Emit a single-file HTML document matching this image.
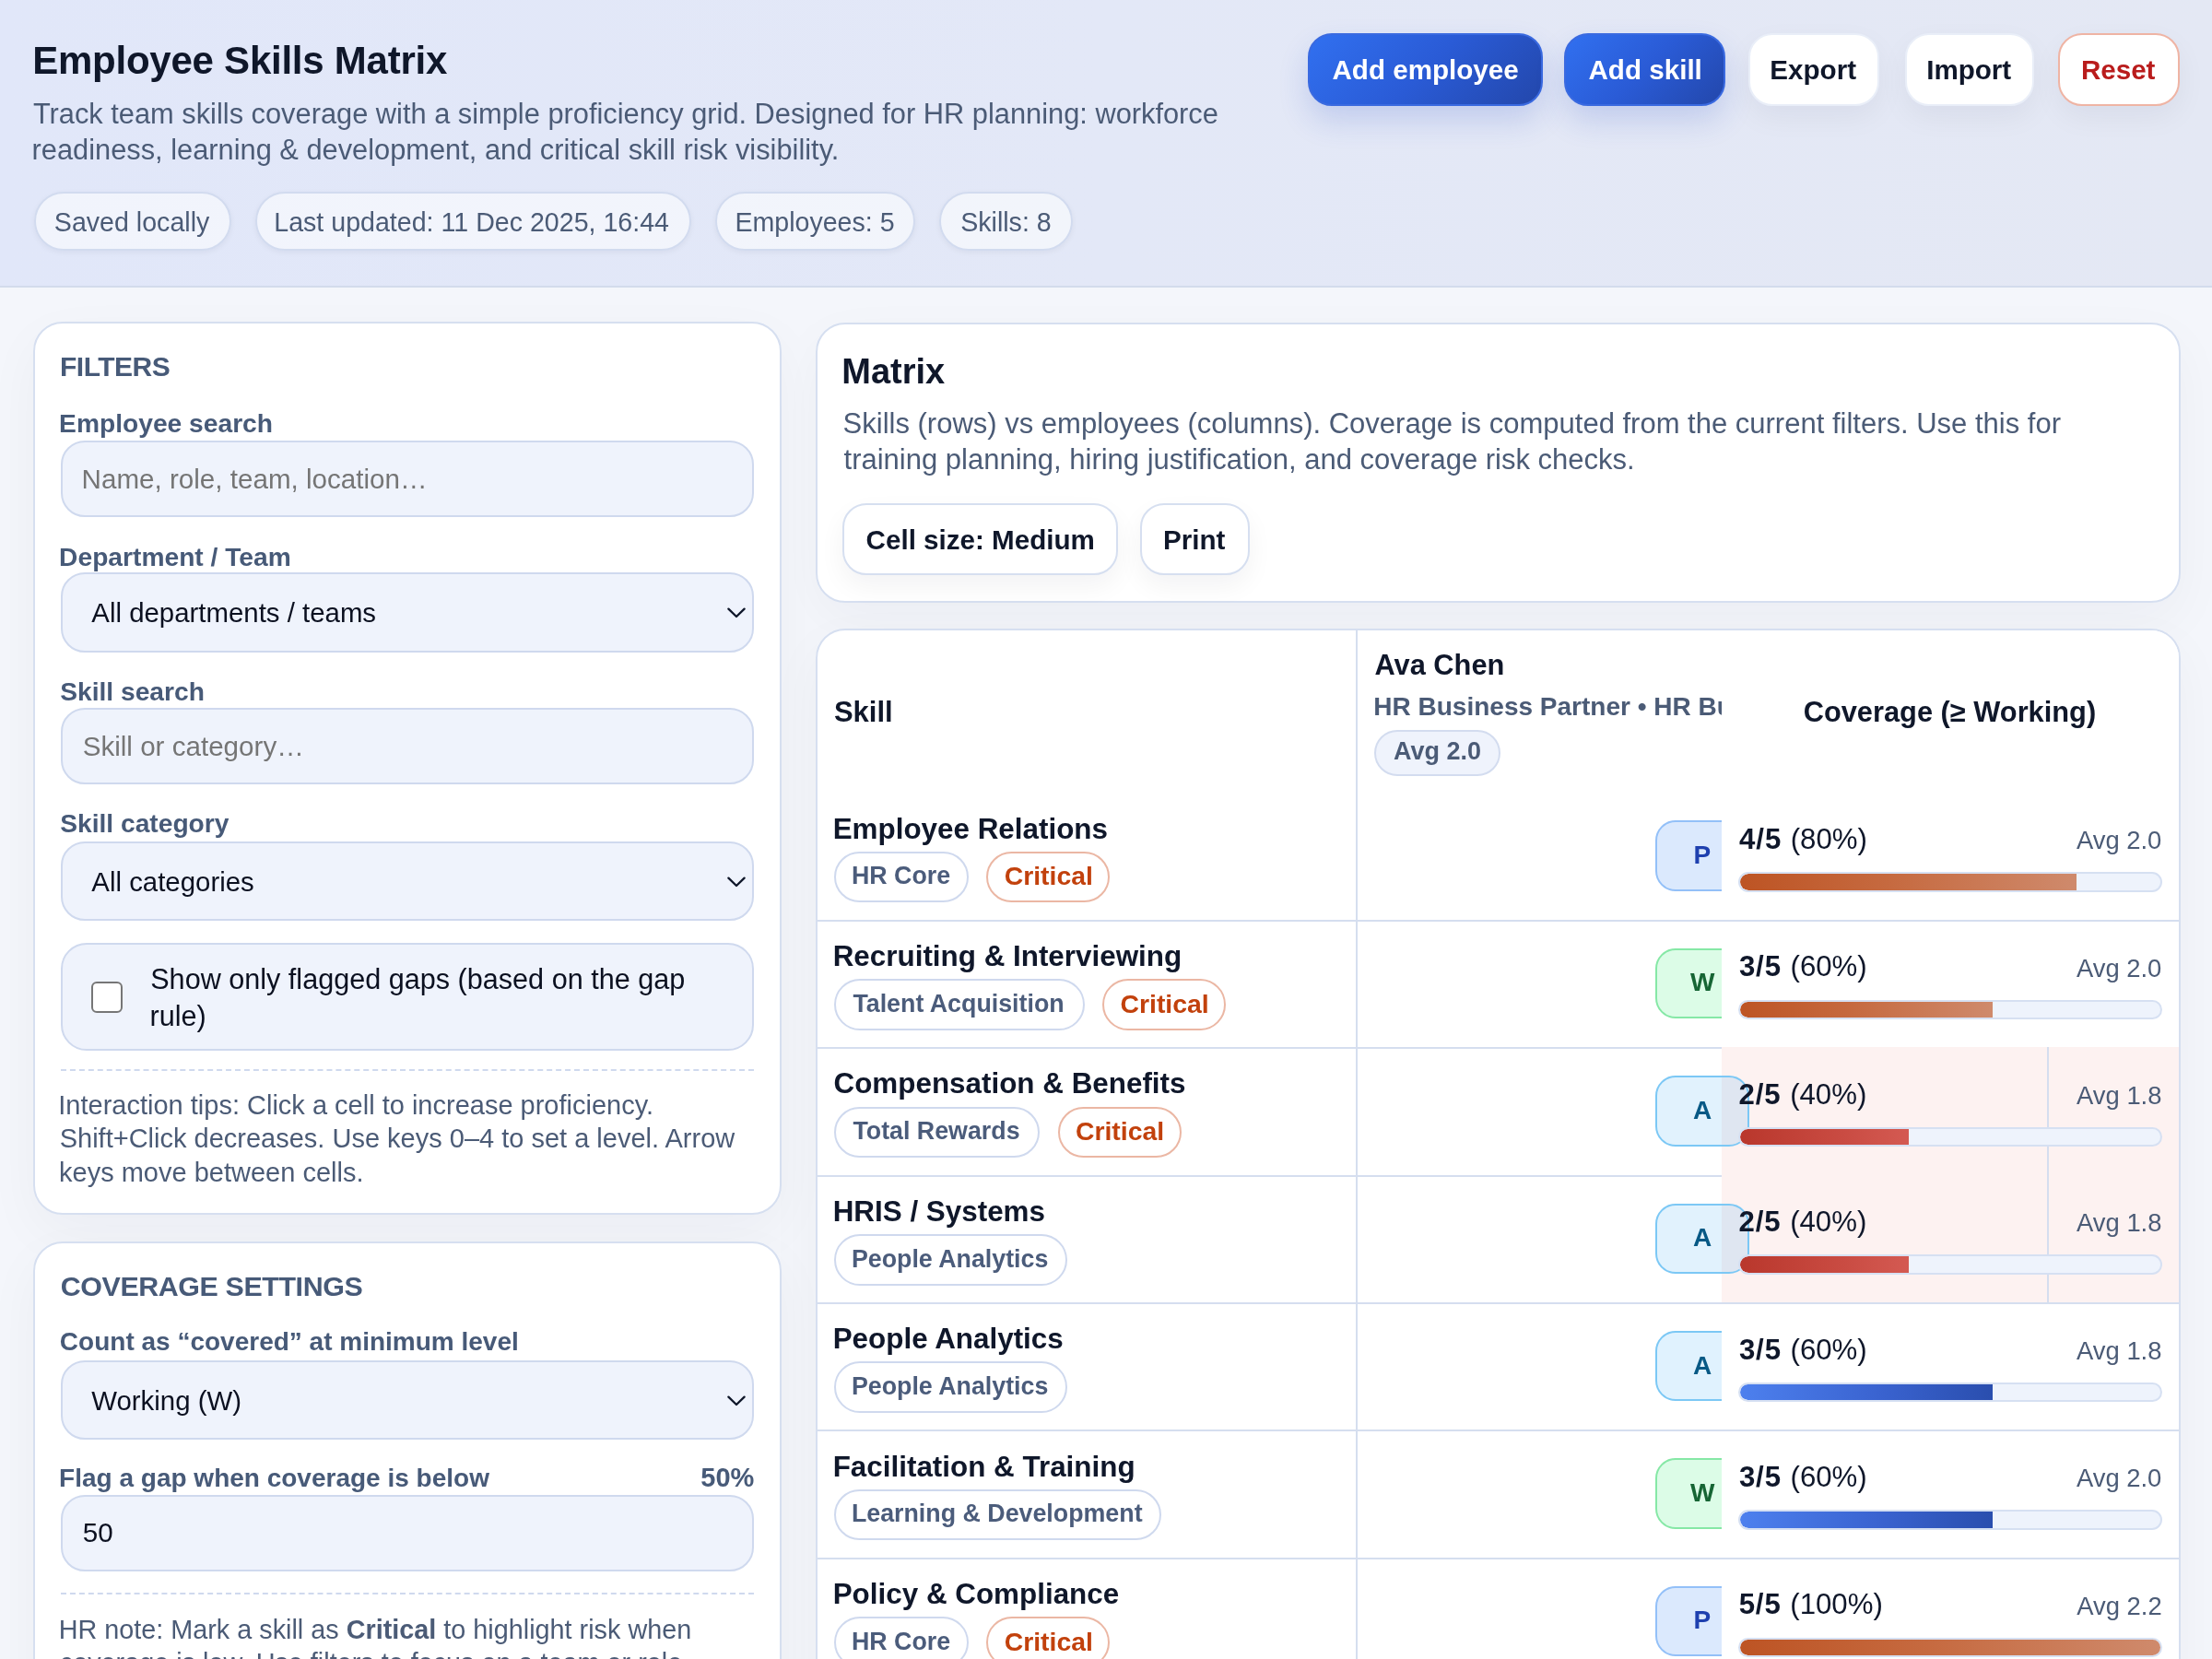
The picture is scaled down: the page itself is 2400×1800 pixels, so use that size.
<!DOCTYPE html>
<html><head><meta charset="utf-8"><title>Employee Skills Matrix</title><style>
html,body{margin:0;padding:0}
html{zoom:2}
@media (max-width:1600px){html{zoom:1}}
body{will-change:transform;width:1200px;height:900px;overflow:hidden;position:relative;background:#f4f6fb;font-family:"Liberation Sans",sans-serif}
.t{position:absolute;white-space:nowrap;line-height:1}
.b{position:absolute}
b{font-weight:700}
</style></head><body>
<div class="b" style="left:0.00px;top:0.00px;width:1200.00px;height:155.50px;background:linear-gradient(90deg,#e1e7f9 0%,#e3e8f7 50%,#e4e8f4 100%);border-bottom:1px solid #d3dbec;box-sizing:border-box;height:156px"></div>
<div class="t" style="left:17.60px;top:22.37px;font-size:21px;font-weight:700;color:#0f172a;letter-spacing:-0.12px;">Employee Skills Matrix</div>
<div class="t" style="left:17.95px;top:54.66px;font-size:15.4px;font-weight:400;color:#4b5b76;letter-spacing:0px;">Track team skills coverage with a simple proficiency grid. Designed for HR planning: workforce</div>
<div class="t" style="left:17.28px;top:74.06px;font-size:15.4px;font-weight:400;color:#4b5b76;letter-spacing:0px;">readiness, learning &amp; development, and critical skill risk visibility.</div>
<div class="b" style="left:18.40px;top:104.00px;width:106.90px;height:32.00px;border:1px solid #d2dbef;background:rgba(255,255,255,.55);border-radius:16px;box-sizing:border-box;box-shadow:0 1px 3px rgba(15,23,42,.05)"></div>
<div class="t" style="left:29.41px;top:113.59px;font-size:14.3px;font-weight:400;color:#4b5b76;letter-spacing:0px;">Saved locally</div>
<div class="b" style="left:138.30px;top:104.00px;width:236.90px;height:32.00px;border:1px solid #d2dbef;background:rgba(255,255,255,.55);border-radius:16px;box-sizing:border-box;box-shadow:0 1px 3px rgba(15,23,42,.05)"></div>
<div class="t" style="left:148.64px;top:113.59px;font-size:14.3px;font-weight:400;color:#4b5b76;letter-spacing:0px;">Last updated: 11 Dec 2025, 16:44</div>
<div class="b" style="left:388.20px;top:104.00px;width:108.20px;height:32.00px;border:1px solid #d2dbef;background:rgba(255,255,255,.55);border-radius:16px;box-sizing:border-box;box-shadow:0 1px 3px rgba(15,23,42,.05)"></div>
<div class="t" style="left:398.69px;top:113.59px;font-size:14.3px;font-weight:400;color:#4b5b76;letter-spacing:0px;">Employees: 5</div>
<div class="b" style="left:509.40px;top:104.00px;width:72.70px;height:32.00px;border:1px solid #d2dbef;background:rgba(255,255,255,.55);border-radius:16px;box-sizing:border-box;box-shadow:0 1px 3px rgba(15,23,42,.05)"></div>
<div class="t" style="left:521.10px;top:113.59px;font-size:14.3px;font-weight:400;color:#4b5b76;letter-spacing:0px;">Skills: 8</div>
<div class="b" style="left:709.50px;top:18.00px;width:127.50px;height:39.50px;background:linear-gradient(135deg,#3170f0 0%,#2a5bd6 50%,#2347ab 100%);border:1px solid #3a6ae0;box-shadow:0 8px 16px rgba(37,80,200,.18);border-radius:13px;box-sizing:border-box"></div>
<div class="t" style="left:722.74px;top:30.47px;font-size:14.8px;font-weight:700;color:#ffffff;letter-spacing:0px;">Add employee</div>
<div class="b" style="left:848.30px;top:18.00px;width:87.90px;height:39.50px;background:linear-gradient(135deg,#3170f0 0%,#2a5bd6 50%,#2347ab 100%);border:1px solid #3a6ae0;box-shadow:0 8px 16px rgba(37,80,200,.18);border-radius:13px;box-sizing:border-box"></div>
<div class="t" style="left:861.75px;top:30.47px;font-size:14.8px;font-weight:700;color:#ffffff;letter-spacing:0px;">Add skill</div>
<div class="b" style="left:948.50px;top:18.00px;width:71.00px;height:39.50px;background:#fff;border:1px solid #e9eef8;box-shadow:0 6px 16px rgba(15,23,42,.05);border-radius:13px;box-sizing:border-box"></div>
<div class="t" style="left:960.16px;top:30.47px;font-size:14.8px;font-weight:700;color:#0f172a;letter-spacing:0px;">Export</div>
<div class="b" style="left:1033.50px;top:18.00px;width:70.00px;height:39.50px;background:#fff;border:1px solid #e9eef8;box-shadow:0 6px 16px rgba(15,23,42,.05);border-radius:13px;box-sizing:border-box"></div>
<div class="t" style="left:1045.08px;top:30.47px;font-size:14.8px;font-weight:700;color:#0f172a;letter-spacing:0px;">Import</div>
<div class="b" style="left:1116.30px;top:18.00px;width:66.40px;height:39.50px;background:#fff;border:1px solid #efb4a4;box-shadow:0 6px 16px rgba(15,23,42,.05);border-radius:13px;box-sizing:border-box"></div>
<div class="t" style="left:1128.94px;top:30.47px;font-size:14.8px;font-weight:700;color:#b91c1c;letter-spacing:0px;">Reset</div>
<div class="b" style="left:18.00px;top:174.50px;width:406.00px;height:484.50px;background:#fff;border:1px solid #d6dff0;border-radius:16px;box-sizing:border-box;box-shadow:0 10px 30px rgba(15,23,42,.04)"></div>
<div class="t" style="left:32.50px;top:191.60px;font-size:15.0px;font-weight:700;color:#475a78;letter-spacing:-0.25px;">FILTERS</div>
<div class="t" style="left:32.06px;top:222.56px;font-size:14.1px;font-weight:700;color:#475a78;letter-spacing:0px;">Employee search</div>
<div class="b" style="left:32.80px;top:239.00px;width:376.00px;height:41.50px;background:#eff3fc;border:1px solid #cfd9ee;border-radius:13px;box-sizing:border-box"></div>
<div class="t" style="left:44.29px;top:252.27px;font-size:14.8px;font-weight:400;color:#757575;letter-spacing:0px;">Name, role, team, location…</div>
<div class="t" style="left:32.06px;top:294.96px;font-size:14.1px;font-weight:700;color:#475a78;letter-spacing:0px;">Department / Team</div>
<div class="b" style="left:32.80px;top:310.70px;width:376.00px;height:43.10px;background:#eff3fc;border:1px solid #cfd9ee;border-radius:13px;box-sizing:border-box"></div>
<div class="t" style="left:49.67px;top:324.95px;font-size:14.7px;font-weight:400;color:#0b1020;letter-spacing:0px;">All departments / teams</div>
<div class="b" style="left:394.50px;top:329.50px;width:10px;height:6px;line-height:0"><svg width="10" height="6" viewBox="0 0 10 6"><path d="M0.7 0.8 L5 5 L9.3 0.8" fill="none" stroke="#0f172a" stroke-width="1.15" stroke-linecap="round" stroke-linejoin="round"/></svg></div>
<div class="t" style="left:32.59px;top:368.21px;font-size:14.1px;font-weight:700;color:#475a78;letter-spacing:0px;">Skill search</div>
<div class="b" style="left:32.80px;top:384.00px;width:376.00px;height:41.40px;background:#eff3fc;border:1px solid #cfd9ee;border-radius:13px;box-sizing:border-box"></div>
<div class="t" style="left:44.83px;top:397.67px;font-size:14.8px;font-weight:400;color:#757575;letter-spacing:0px;">Skill or category…</div>
<div class="t" style="left:32.59px;top:439.56px;font-size:14.1px;font-weight:700;color:#475a78;letter-spacing:0px;">Skill category</div>
<div class="b" style="left:32.80px;top:456.40px;width:376.00px;height:43.00px;background:#eff3fc;border:1px solid #cfd9ee;border-radius:13px;box-sizing:border-box"></div>
<div class="t" style="left:49.67px;top:470.85px;font-size:14.7px;font-weight:400;color:#0b1020;letter-spacing:0px;">All categories</div>
<div class="b" style="left:394.50px;top:475.50px;width:10px;height:6px;line-height:0"><svg width="10" height="6" viewBox="0 0 10 6"><path d="M0.7 0.8 L5 5 L9.3 0.8" fill="none" stroke="#0f172a" stroke-width="1.15" stroke-linecap="round" stroke-linejoin="round"/></svg></div>
<div class="b" style="left:32.80px;top:511.70px;width:376.00px;height:58.50px;background:#eff3fc;border:1px solid #cfd9ee;border-radius:13px;box-sizing:border-box;border-radius:14px"></div>
<div class="b" style="left:49.60px;top:532.50px;width:16.70px;height:16.80px;background:#fff;border:1px solid #767676;border-radius:3px;box-sizing:border-box"></div>
<div class="t" style="left:81.61px;top:523.55px;font-size:15.3px;font-weight:400;color:#0b1020;letter-spacing:0px;">Show only flagged gaps (based on the gap</div>
<div class="t" style="left:81.28px;top:543.35px;font-size:15.3px;font-weight:400;color:#0b1020;letter-spacing:0px;">rule)</div>
<div class="b" style="left:32.80px;top:580.00px;width:376.00px;height:1.00px;border-top:1px dashed #cfd9ee;box-sizing:border-box"></div>
<div class="t" style="left:31.66px;top:592.32px;font-size:14.5px;font-weight:400;color:#4b5b76;letter-spacing:0px;">Interaction tips: Click a cell to increase proficiency.</div>
<div class="t" style="left:32.34px;top:610.42px;font-size:14.5px;font-weight:400;color:#4b5b76;letter-spacing:0px;">Shift+Click decreases. Use keys 0–4 to set a level. Arrow</div>
<div class="t" style="left:32.02px;top:628.82px;font-size:14.5px;font-weight:400;color:#4b5b76;letter-spacing:0px;">keys move between cells.</div>
<div class="b" style="left:18.00px;top:673.50px;width:406.00px;height:326.50px;background:#fff;border:1px solid #d6dff0;border-radius:16px;box-sizing:border-box;box-shadow:0 10px 30px rgba(15,23,42,.04)"></div>
<div class="t" style="left:32.88px;top:690.03px;font-size:15.2px;font-weight:700;color:#475a78;letter-spacing:-0.2px;">COVERAGE SETTINGS</div>
<div class="t" style="left:32.43px;top:721.15px;font-size:14.0px;font-weight:700;color:#475a78;letter-spacing:0px;">Count as “covered” at minimum level</div>
<div class="b" style="left:32.80px;top:738.00px;width:376.00px;height:42.80px;background:#eff3fc;border:1px solid #cfd9ee;border-radius:13px;box-sizing:border-box"></div>
<div class="t" style="left:49.64px;top:752.35px;font-size:14.7px;font-weight:400;color:#0b1020;letter-spacing:0px;">Working (W)</div>
<div class="b" style="left:394.50px;top:757.00px;width:10px;height:6px;line-height:0"><svg width="10" height="6" viewBox="0 0 10 6"><path d="M0.7 0.8 L5 5 L9.3 0.8" fill="none" stroke="#0f172a" stroke-width="1.15" stroke-linecap="round" stroke-linejoin="round"/></svg></div>
<div class="t" style="left:32.06px;top:795.15px;font-size:14.0px;font-weight:700;color:#475a78;letter-spacing:0px;">Flag a gap when coverage is below</div>
<div class="t" style="left:380.16px;top:794.72px;font-size:14.5px;font-weight:700;color:#475a78;letter-spacing:0px;">50%</div>
<div class="b" style="left:32.80px;top:811.20px;width:376.00px;height:41.20px;background:#eff3fc;border:1px solid #cfd9ee;border-radius:13px;box-sizing:border-box"></div>
<div class="t" style="left:44.91px;top:823.77px;font-size:14.8px;font-weight:400;color:#0b1020;letter-spacing:0px;">50</div>
<div class="b" style="left:32.80px;top:864.20px;width:376.00px;height:1.00px;border-top:1px dashed #cfd9ee;box-sizing:border-box"></div>
<div class="t" style="left:31.82px;top:876.91px;font-size:14.4px;font-weight:400;color:#4b5b76;letter-spacing:0px;">HR note: Mark a skill as <b style="font-weight:700">Critical</b> to highlight risk when</div>
<div class="t" style="left:32.39px;top:894.91px;font-size:14.4px;font-weight:400;color:#4b5b76;letter-spacing:0px;">coverage is low. Use filters to focus on a team or role.</div>
<div class="b" style="left:442.50px;top:175.00px;width:740.50px;height:151.90px;background:#fff;border:1px solid #d6dff0;border-radius:16px;box-sizing:border-box;box-shadow:0 10px 30px rgba(15,23,42,.04)"></div>
<div class="t" style="left:456.63px;top:192.01px;font-size:19px;font-weight:700;color:#0f172a;letter-spacing:0px;">Matrix</div>
<div class="t" style="left:457.30px;top:221.78px;font-size:15.5px;font-weight:400;color:#4b5b76;letter-spacing:0px;">Skills (rows) vs employees (columns). Coverage is computed from the current filters. Use this for</div>
<div class="t" style="left:457.77px;top:241.38px;font-size:15.5px;font-weight:400;color:#4b5b76;letter-spacing:0px;">training planning, hiring justification, and coverage risk checks.</div>
<div class="b" style="left:457.20px;top:273.00px;width:149.10px;height:39.00px;background:#fff;border:1px solid #d6dff0;border-radius:13px;box-sizing:border-box;box-shadow:0 6px 14px rgba(15,23,42,.05)"></div>
<div class="t" style="left:469.81px;top:285.57px;font-size:14.8px;font-weight:700;color:#0f172a;letter-spacing:0px;">Cell size: Medium</div>
<div class="b" style="left:618.70px;top:273.00px;width:59.10px;height:39.00px;background:#fff;border:1px solid #d6dff0;border-radius:13px;box-sizing:border-box;box-shadow:0 6px 14px rgba(15,23,42,.05)"></div>
<div class="t" style="left:630.99px;top:285.57px;font-size:14.8px;font-weight:700;color:#0f172a;letter-spacing:0px;">Print</div>
<div class="b" style="left:442.5px;top:340.9px;width:740.5px;height:700px;background:#fff;border:1px solid #d6dff0;border-radius:16px;box-sizing:border-box;box-shadow:0 10px 30px rgba(15,23,42,.04);overflow:hidden">
<div class="b" style="left:291.90px;top:-1.00px;width:1.00px;height:1459.10px;background:#d5deef"></div>
<div class="t" style="left:8.95px;top:36.48px;font-size:15.5px;font-weight:700;color:#0f172a;letter-spacing:0px;">Skill</div>
<div class="t" style="left:302.22px;top:11.36px;font-size:15.4px;font-weight:700;color:#0f172a;letter-spacing:0px;">Ava Chen</div>
<div class="t" style="left:301.66px;top:34.80px;font-size:14.0px;font-weight:700;color:#4b5b76;letter-spacing:0px;">HR Business Partner • HR Business Partners</div>
<div class="b" style="left:302.20px;top:54.10px;width:68.30px;height:25.00px;background:#eff3fc;border:1px solid #d3dcef;border-radius:13px;box-sizing:border-box"></div>
<div class="t" style="left:312.45px;top:59.17px;font-size:13.5px;font-weight:700;color:#4b5b76;letter-spacing:0px;">Avg 2.0</div>
<div class="b" style="left:-1.00px;top:157.00px;width:740.50px;height:1.00px;background:#d5deef"></div>
<div class="t" style="left:8.35px;top:99.91px;font-size:15.7px;font-weight:700;color:#0f172a;letter-spacing:0px;">Employee Relations</div>
<div class="b" style="left:9.10px;top:120.00px;width:72.75px;height:27.80px;border:1px solid #cfd9ee;border-radius:14px;box-sizing:border-box;background:#fff"></div>
<div class="t" style="left:18.45px;top:126.85px;font-size:13.4px;font-weight:700;color:#4b5c7b;letter-spacing:0px;">HR Core</div>
<div class="b" style="left:91.65px;top:120.00px;width:67.05px;height:27.80px;border:1px solid #ebb7a4;border-radius:14px;box-sizing:border-box;background:#fff"></div>
<div class="t" style="left:101.32px;top:126.18px;font-size:14.2px;font-weight:700;color:#c2410c;letter-spacing:0px;">Critical</div>
<div class="b" style="left:454.60px;top:103.30px;width:51.10px;height:38.20px;background:#dbe9fd;border:1px solid #93c0f8;border-radius:11px;box-sizing:border-box"></div>
<div class="t" style="left:475.20px;top:115.15px;font-size:14.0px;font-weight:700;color:#1e40af;letter-spacing:0px;">P</div>
<div class="b" style="left:490.60px;top:88.80px;width:248.90px;height:68.20px;background:#fff"></div>
<div class="t" style="left:500.06px;top:105.59px;font-size:15.6px;font-weight:700;color:#0f172a;letter-spacing:0px;"><span style="letter-spacing:.45px">4/5 </span><span style="font-weight:400">(80%)</span></div>
<div class="t" style="left:682.98px;top:107.20px;font-size:13.7px;font-weight:400;color:#4b5b76;letter-spacing:0px;">Avg 2.0</div>
<div class="b" style="left:499.60px;top:131.20px;width:230.00px;height:10.70px;background:#eef3fc;border:1px solid #d6e0f2;border-radius:6px;box-sizing:border-box;overflow:hidden"><div style="position:absolute;left:0;top:0;bottom:0;width:80.0%;background:linear-gradient(90deg,#bd5424 0%,#c66a40 45%,#cf8a6c 100%);border-radius:5px 0 0 5px"></div></div>
<div class="b" style="left:-1.00px;top:226.20px;width:740.50px;height:1.00px;background:#d5deef"></div>
<div class="t" style="left:8.35px;top:169.11px;font-size:15.7px;font-weight:700;color:#0f172a;letter-spacing:0px;">Recruiting &amp; Interviewing</div>
<div class="b" style="left:9.10px;top:189.20px;width:135.66px;height:27.80px;border:1px solid #cfd9ee;border-radius:14px;box-sizing:border-box;background:#fff"></div>
<div class="t" style="left:19.20px;top:196.05px;font-size:13.4px;font-weight:700;color:#4b5c7b;letter-spacing:0px;">Talent Acquisition</div>
<div class="b" style="left:154.56px;top:189.20px;width:67.05px;height:27.80px;border:1px solid #ebb7a4;border-radius:14px;box-sizing:border-box;background:#fff"></div>
<div class="t" style="left:164.22px;top:195.38px;font-size:14.2px;font-weight:700;color:#c2410c;letter-spacing:0px;">Critical</div>
<div class="b" style="left:454.60px;top:172.50px;width:51.10px;height:38.20px;background:#dcfce7;border:1px solid #86e8a6;border-radius:11px;box-sizing:border-box"></div>
<div class="t" style="left:473.49px;top:184.35px;font-size:14.0px;font-weight:700;color:#166534;letter-spacing:0px;">W</div>
<div class="b" style="left:490.60px;top:158.00px;width:248.90px;height:68.20px;background:#fff"></div>
<div class="t" style="left:499.94px;top:174.79px;font-size:15.6px;font-weight:700;color:#0f172a;letter-spacing:0px;"><span style="letter-spacing:.45px">3/5 </span><span style="font-weight:400">(60%)</span></div>
<div class="t" style="left:682.98px;top:176.40px;font-size:13.7px;font-weight:400;color:#4b5b76;letter-spacing:0px;">Avg 2.0</div>
<div class="b" style="left:499.60px;top:200.40px;width:230.00px;height:10.70px;background:#eef3fc;border:1px solid #d6e0f2;border-radius:6px;box-sizing:border-box;overflow:hidden"><div style="position:absolute;left:0;top:0;bottom:0;width:60.0%;background:linear-gradient(90deg,#bd5424 0%,#c66a40 45%,#cf8a6c 100%);border-radius:5px 0 0 5px"></div></div>
<div class="b" style="left:-1.00px;top:295.40px;width:740.50px;height:1.00px;background:#d5deef"></div>
<div class="t" style="left:8.76px;top:238.31px;font-size:15.7px;font-weight:700;color:#0f172a;letter-spacing:0px;">Compensation &amp; Benefits</div>
<div class="b" style="left:9.10px;top:258.40px;width:111.39px;height:27.80px;border:1px solid #cfd9ee;border-radius:14px;box-sizing:border-box;background:#fff"></div>
<div class="t" style="left:19.20px;top:265.25px;font-size:13.4px;font-weight:700;color:#4b5c7b;letter-spacing:0px;">Total Rewards</div>
<div class="b" style="left:130.29px;top:258.40px;width:67.05px;height:27.80px;border:1px solid #ebb7a4;border-radius:14px;box-sizing:border-box;background:#fff"></div>
<div class="t" style="left:139.96px;top:264.58px;font-size:14.2px;font-weight:700;color:#c2410c;letter-spacing:0px;">Critical</div>
<div class="b" style="left:490.60px;top:226.20px;width:248.90px;height:69.20px;background:#fdf2f1"></div>
<div class="b" style="left:667.10px;top:226.20px;width:1.00px;height:69.20px;background:#d5deef"></div>
<div class="b" style="left:454.60px;top:241.70px;width:51.10px;height:38.20px;background:rgba(40,160,240,.14);border:1px solid #7cc8f5;border-radius:11px;box-sizing:border-box"></div>
<div class="t" style="left:475.06px;top:253.55px;font-size:14.0px;font-weight:700;color:#075985;letter-spacing:0px;">A</div>
<div class="t" style="left:499.76px;top:243.99px;font-size:15.6px;font-weight:700;color:#0f172a;letter-spacing:0px;"><span style="letter-spacing:.45px">2/5 </span><span style="font-weight:400">(40%)</span></div>
<div class="t" style="left:683.04px;top:245.60px;font-size:13.7px;font-weight:400;color:#4b5b76;letter-spacing:0px;">Avg 1.8</div>
<div class="b" style="left:499.60px;top:269.60px;width:230.00px;height:10.70px;background:#eef3fc;border:1px solid #d6e0f2;border-radius:6px;box-sizing:border-box;overflow:hidden"><div style="position:absolute;left:0;top:0;bottom:0;width:40.0%;background:linear-gradient(90deg,#b9372c 0%,#c94b42 60%,#d45a52 100%);border-radius:5px 0 0 5px"></div></div>
<div class="b" style="left:-1.00px;top:364.60px;width:740.50px;height:1.00px;background:#d5deef"></div>
<div class="t" style="left:8.35px;top:307.51px;font-size:15.7px;font-weight:700;color:#0f172a;letter-spacing:0px;">HRIS / Systems</div>
<div class="b" style="left:9.10px;top:327.60px;width:126.29px;height:27.80px;border:1px solid #cfd9ee;border-radius:14px;box-sizing:border-box;background:#fff"></div>
<div class="t" style="left:18.45px;top:334.45px;font-size:13.4px;font-weight:700;color:#4b5c7b;letter-spacing:0px;">People Analytics</div>
<div class="b" style="left:490.60px;top:295.40px;width:248.90px;height:69.20px;background:#fdf2f1"></div>
<div class="b" style="left:667.10px;top:295.40px;width:1.00px;height:69.20px;background:#d5deef"></div>
<div class="b" style="left:454.60px;top:310.90px;width:51.10px;height:38.20px;background:rgba(40,160,240,.14);border:1px solid #7cc8f5;border-radius:11px;box-sizing:border-box"></div>
<div class="t" style="left:475.06px;top:322.75px;font-size:14.0px;font-weight:700;color:#075985;letter-spacing:0px;">A</div>
<div class="t" style="left:499.76px;top:313.19px;font-size:15.6px;font-weight:700;color:#0f172a;letter-spacing:0px;"><span style="letter-spacing:.45px">2/5 </span><span style="font-weight:400">(40%)</span></div>
<div class="t" style="left:683.04px;top:314.80px;font-size:13.7px;font-weight:400;color:#4b5b76;letter-spacing:0px;">Avg 1.8</div>
<div class="b" style="left:499.60px;top:338.80px;width:230.00px;height:10.70px;background:#eef3fc;border:1px solid #d6e0f2;border-radius:6px;box-sizing:border-box;overflow:hidden"><div style="position:absolute;left:0;top:0;bottom:0;width:40.0%;background:linear-gradient(90deg,#b9372c 0%,#c94b42 60%,#d45a52 100%);border-radius:5px 0 0 5px"></div></div>
<div class="b" style="left:-1.00px;top:433.80px;width:740.50px;height:1.00px;background:#d5deef"></div>
<div class="t" style="left:8.35px;top:376.71px;font-size:15.7px;font-weight:700;color:#0f172a;letter-spacing:0px;">People Analytics</div>
<div class="b" style="left:9.10px;top:396.80px;width:126.29px;height:27.80px;border:1px solid #cfd9ee;border-radius:14px;box-sizing:border-box;background:#fff"></div>
<div class="t" style="left:18.45px;top:403.65px;font-size:13.4px;font-weight:700;color:#4b5c7b;letter-spacing:0px;">People Analytics</div>
<div class="b" style="left:454.60px;top:380.10px;width:51.10px;height:38.20px;background:#e0f2fe;border:1px solid #7cc8f5;border-radius:11px;box-sizing:border-box"></div>
<div class="t" style="left:475.06px;top:391.95px;font-size:14.0px;font-weight:700;color:#075985;letter-spacing:0px;">A</div>
<div class="b" style="left:490.60px;top:365.60px;width:248.90px;height:68.20px;background:#fff"></div>
<div class="t" style="left:499.94px;top:382.39px;font-size:15.6px;font-weight:700;color:#0f172a;letter-spacing:0px;"><span style="letter-spacing:.45px">3/5 </span><span style="font-weight:400">(60%)</span></div>
<div class="t" style="left:683.04px;top:384.00px;font-size:13.7px;font-weight:400;color:#4b5b76;letter-spacing:0px;">Avg 1.8</div>
<div class="b" style="left:499.60px;top:408.00px;width:230.00px;height:10.70px;background:#eef3fc;border:1px solid #d6e0f2;border-radius:6px;box-sizing:border-box;overflow:hidden"><div style="position:absolute;left:0;top:0;bottom:0;width:60.0%;background:linear-gradient(90deg,#4d80ee 0%,#3a63d0 55%,#2a4eae 100%);border-radius:5px 0 0 5px"></div></div>
<div class="b" style="left:-1.00px;top:503.00px;width:740.50px;height:1.00px;background:#d5deef"></div>
<div class="t" style="left:8.35px;top:445.91px;font-size:15.7px;font-weight:700;color:#0f172a;letter-spacing:0px;">Facilitation &amp; Training</div>
<div class="b" style="left:9.10px;top:466.00px;width:177.29px;height:27.80px;border:1px solid #cfd9ee;border-radius:14px;box-sizing:border-box;background:#fff"></div>
<div class="t" style="left:18.45px;top:472.85px;font-size:13.4px;font-weight:700;color:#4b5c7b;letter-spacing:0px;">Learning &amp; Development</div>
<div class="b" style="left:454.60px;top:449.30px;width:51.10px;height:38.20px;background:#dcfce7;border:1px solid #86e8a6;border-radius:11px;box-sizing:border-box"></div>
<div class="t" style="left:473.49px;top:461.15px;font-size:14.0px;font-weight:700;color:#166534;letter-spacing:0px;">W</div>
<div class="b" style="left:490.60px;top:434.80px;width:248.90px;height:68.20px;background:#fff"></div>
<div class="t" style="left:499.94px;top:451.59px;font-size:15.6px;font-weight:700;color:#0f172a;letter-spacing:0px;"><span style="letter-spacing:.45px">3/5 </span><span style="font-weight:400">(60%)</span></div>
<div class="t" style="left:682.98px;top:453.20px;font-size:13.7px;font-weight:400;color:#4b5b76;letter-spacing:0px;">Avg 2.0</div>
<div class="b" style="left:499.60px;top:477.20px;width:230.00px;height:10.70px;background:#eef3fc;border:1px solid #d6e0f2;border-radius:6px;box-sizing:border-box;overflow:hidden"><div style="position:absolute;left:0;top:0;bottom:0;width:60.0%;background:linear-gradient(90deg,#4d80ee 0%,#3a63d0 55%,#2a4eae 100%);border-radius:5px 0 0 5px"></div></div>
<div class="b" style="left:-1.00px;top:572.20px;width:740.50px;height:1.00px;background:#d5deef"></div>
<div class="t" style="left:8.35px;top:515.11px;font-size:15.7px;font-weight:700;color:#0f172a;letter-spacing:0px;">Policy &amp; Compliance</div>
<div class="b" style="left:9.10px;top:535.20px;width:72.75px;height:27.80px;border:1px solid #cfd9ee;border-radius:14px;box-sizing:border-box;background:#fff"></div>
<div class="t" style="left:18.45px;top:542.05px;font-size:13.4px;font-weight:700;color:#4b5c7b;letter-spacing:0px;">HR Core</div>
<div class="b" style="left:91.65px;top:535.20px;width:67.05px;height:27.80px;border:1px solid #ebb7a4;border-radius:14px;box-sizing:border-box;background:#fff"></div>
<div class="t" style="left:101.32px;top:541.38px;font-size:14.2px;font-weight:700;color:#c2410c;letter-spacing:0px;">Critical</div>
<div class="b" style="left:454.60px;top:518.50px;width:51.10px;height:38.20px;background:#dbe9fd;border:1px solid #93c0f8;border-radius:11px;box-sizing:border-box"></div>
<div class="t" style="left:475.20px;top:530.35px;font-size:14.0px;font-weight:700;color:#1e40af;letter-spacing:0px;">P</div>
<div class="b" style="left:490.60px;top:504.00px;width:248.90px;height:68.20px;background:#fff"></div>
<div class="t" style="left:499.82px;top:520.79px;font-size:15.6px;font-weight:700;color:#0f172a;letter-spacing:0px;"><span style="letter-spacing:.45px">5/5 </span><span style="font-weight:400">(100%)</span></div>
<div class="t" style="left:683.13px;top:522.40px;font-size:13.7px;font-weight:400;color:#4b5b76;letter-spacing:0px;">Avg 2.2</div>
<div class="b" style="left:499.60px;top:546.40px;width:230.00px;height:10.70px;background:#eef3fc;border:1px solid #d6e0f2;border-radius:6px;box-sizing:border-box;overflow:hidden"><div style="position:absolute;left:0;top:0;bottom:0;width:100.0%;background:linear-gradient(90deg,#bd5424 0%,#c66a40 45%,#cf8a6c 100%);border-radius:5px 0 0 5px"></div></div>
<div class="b" style="left:490.60px;top:0.00px;width:248.90px;height:87.80px;background:#fff"></div>
<div class="t" style="left:534.84px;top:37.11px;font-size:15.4px;font-weight:700;color:#0f172a;letter-spacing:0px;">Coverage (≥ Working)</div>
</div>
</body></html>
